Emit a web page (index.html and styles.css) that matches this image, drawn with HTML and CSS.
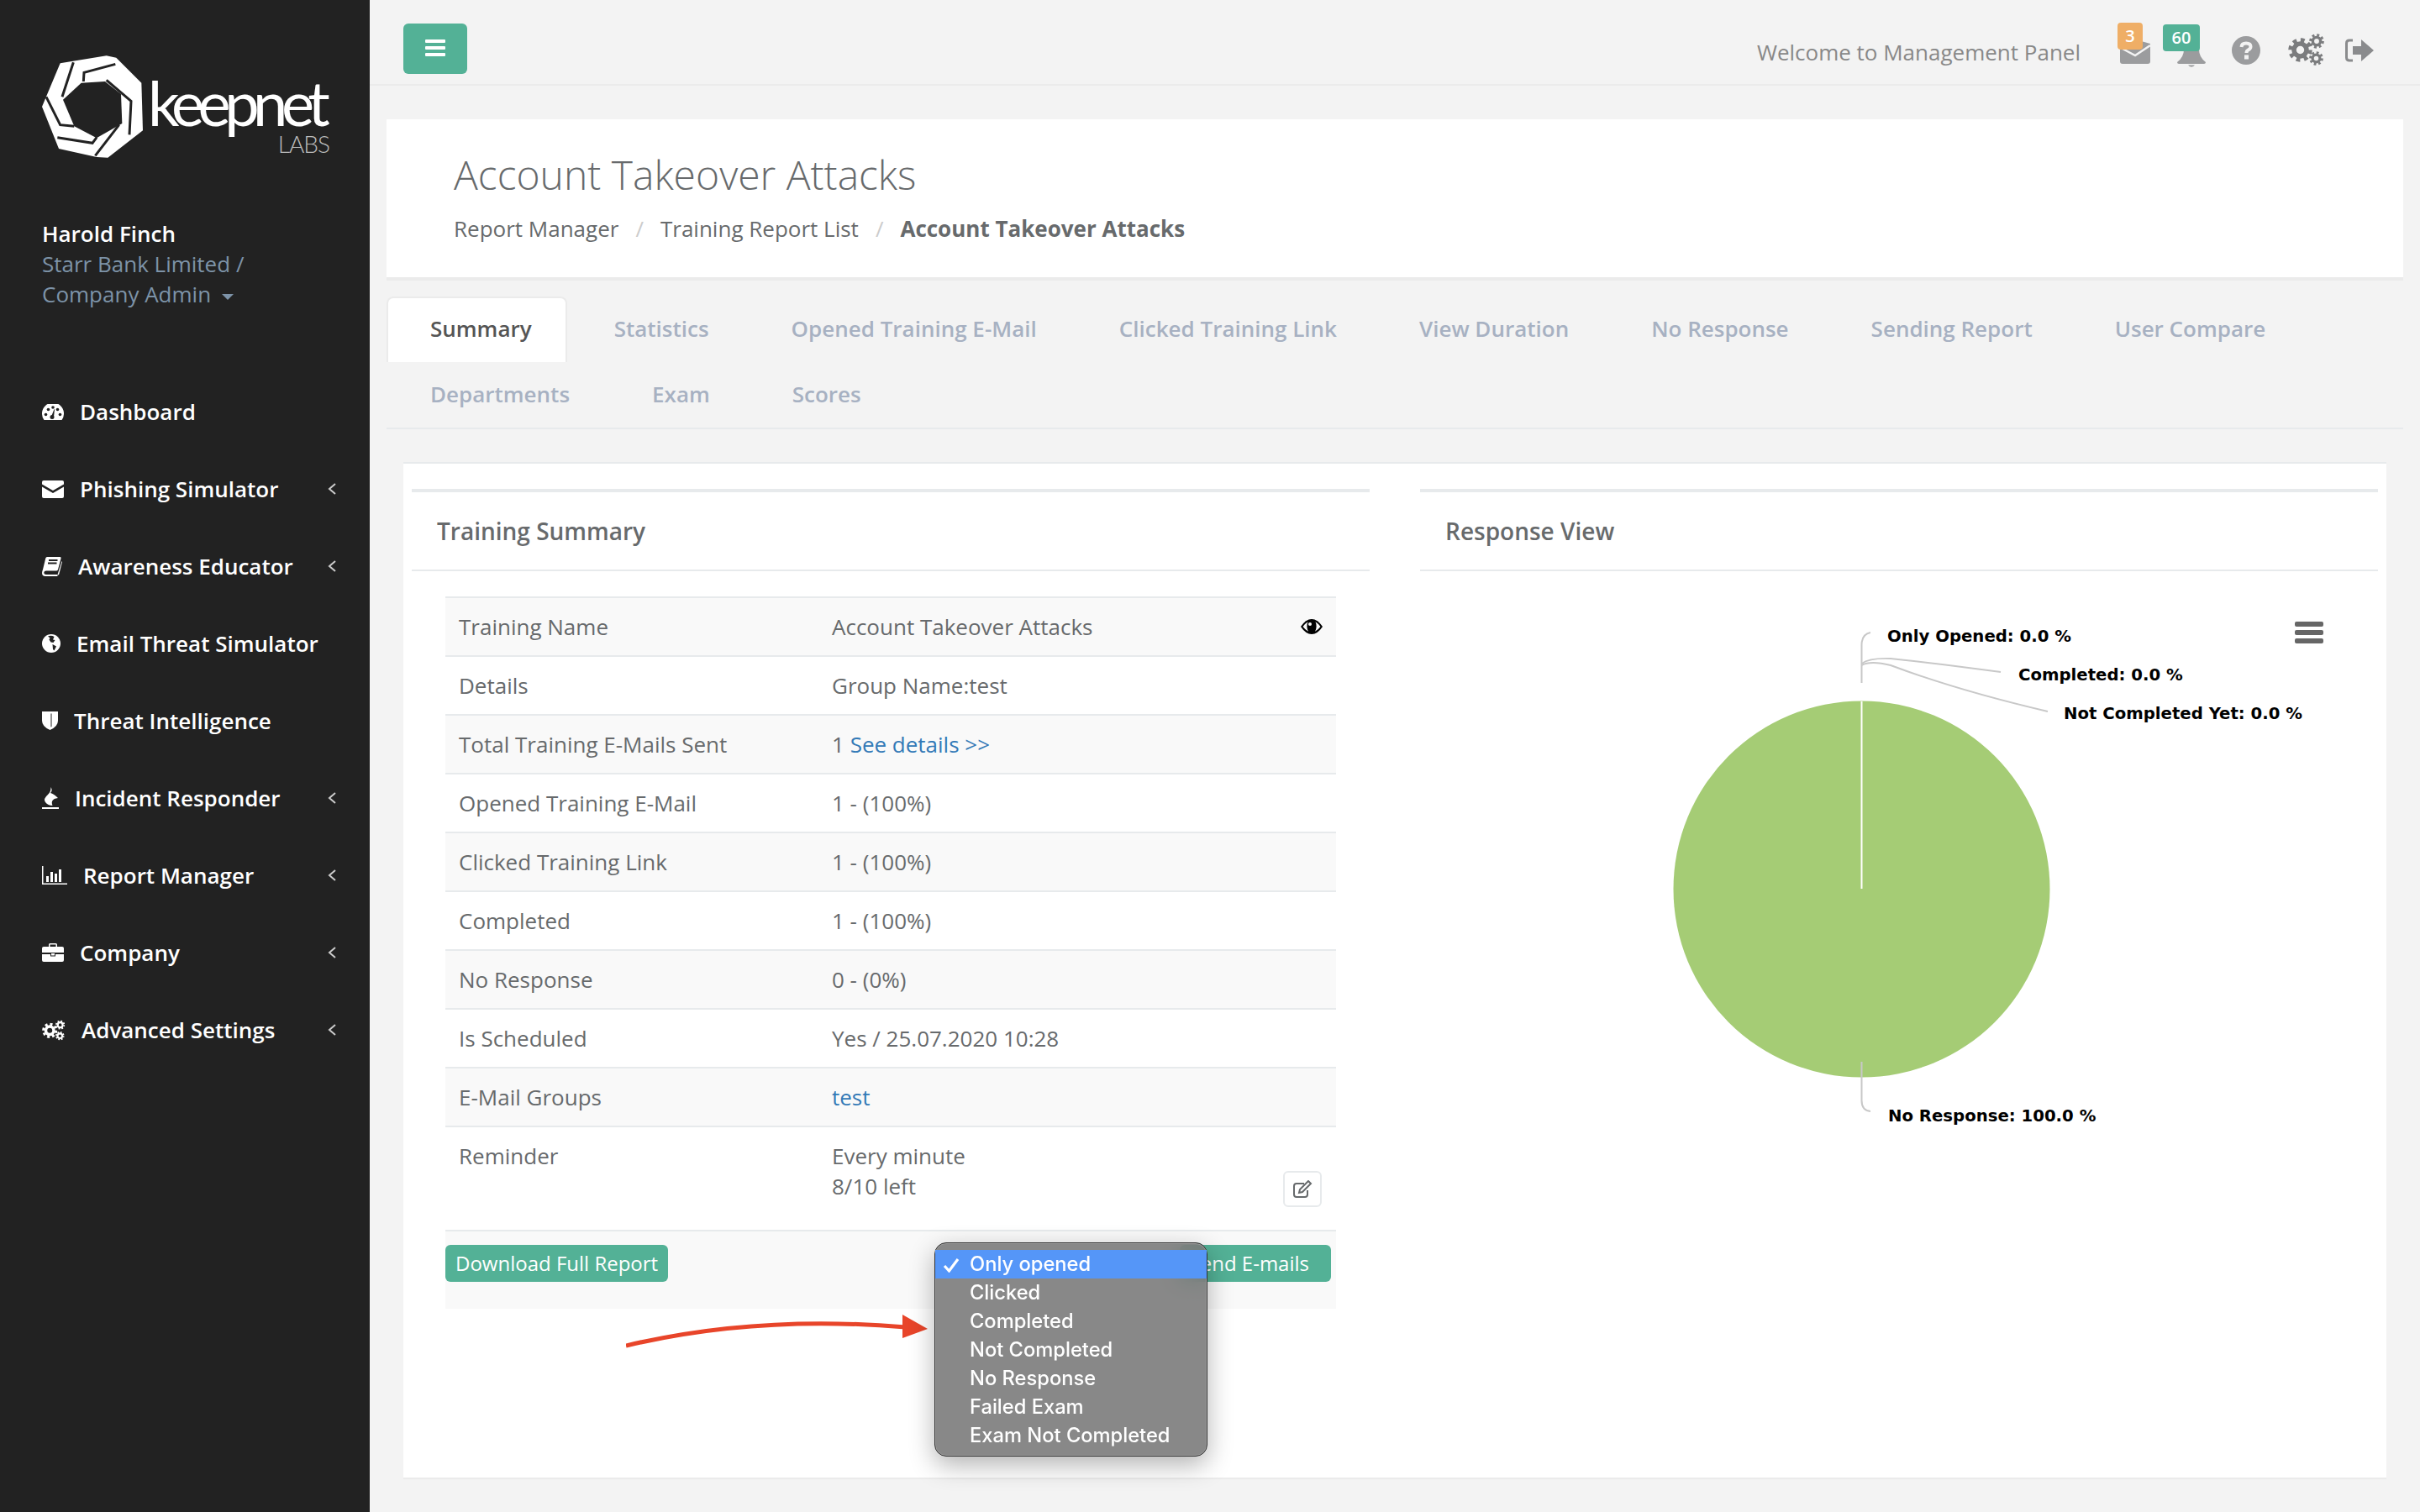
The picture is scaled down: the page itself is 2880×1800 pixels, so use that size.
FILE: index.html
```html
<!DOCTYPE html>
<html lang="en">
<head>
    <meta charset="UTF-8">
    <title>Account Takeover Attacks</title>
    <link rel="stylesheet" href="styles.css">
</head>
<body>
    <svg class="defs" width="0" height="0">
        <symbol id="gear" viewBox="0 0 24 24">
            <circle cx="12" cy="12" r="6.2" fill="none" stroke="currentColor" stroke-width="4.6"/>
            <circle cx="12" cy="12" r="9.8" fill="none" stroke="currentColor" stroke-width="4" stroke-dasharray="3.9 3.8"/>
        </symbol>
    </svg>

    <nav class="sidebar">
        <div class="logo">
            <svg class="logo-mark" viewBox="150 198 360 364" width="120" height="122">
                <path d="M380 198L415 205L505 295L510 465L385 562L345 560L210 530L150 380L215 225Z" fill="#fff"/>
                <path d="M375 290L432 335L436 440L345 492L265 450L225 355L290 295Z" fill="#222"/>
                <path d="M262 222L222 345M298 290L300 258L412 228M380 285L468 360L462 480M340 555L425 445M205 490L330 510L345 490M165 345L215 445L265 450" fill="none" stroke="#222" stroke-width="9"/>
            </svg>
            <div class="logo-text">
                <span class="logo-name">keepnet</span>
                <span class="logo-labs">LABS</span>
            </div>
        </div>
        <div class="profile">
            <div class="profile-name">Harold Finch</div>
            <div class="profile-role">Starr Bank Limited /<br>Company Admin <span class="caret"></span></div>
        </div>
        <ul class="menu">
            <li>
                <svg width="26" height="19" viewBox="0 0 26 19"><path d="M2.5 19A13 13 0 1 1 23.500 19Z" fill="#fff"/><g fill="#222"><circle cx="4.500" cy="12.500" r="1.800"/><circle cx="7.500" cy="6.500" r="1.800"/><circle cx="13" cy="4" r="1.800"/><circle cx="21.500" cy="12.500" r="1.800"/><circle cx="18.500" cy="6.500" r="1.800"/><circle cx="12" cy="15.500" r="2.500"/><path d="M11 15L14.500 6L15 6.500L14 15Z"/></g></svg>
                <span>Dashboard</span>
            </li>
            <li>
                <svg width="26" height="21" viewBox="0 0 26 21" fill="#fff"><path d="M0 2Q0 0 2 0H24Q26 0 26 2V4.500L13 12L0 4.500Z"/><path d="M0 7.500L13 15L26 7.500V19Q26 21 24 21H2Q0 21 0 19Z"/></svg>
                <span>Phishing Simulator</span>
                <svg class="chevron" width="10" height="16" viewBox="0 0 10 16"><path d="M9 2L2 8L9 14" fill="none" stroke="#ccc" stroke-width="2"/></svg>
            </li>
            <li>
                <svg width="24" height="23" viewBox="0 0 24 23" fill="#fff"><path d="M6 0H21.500Q23 0 22.500 2L19 15Q18.500 16.500 17 16.500H5Q2.500 16.500 2.300 18.500Q2.300 21 5 21H18.500V23H4Q0 23 0 19Q0 17.500 1 15L4.300 1.500Q4.700 0 6 0Z"/><path d="M23.500 5L24 6L20 21.500L18.500 21Z"/><path d="M8 4H18.500M7 7.500H17.500" stroke="#222" stroke-width="1.800"/></svg>
                <span>Awareness Educator</span>
                <svg class="chevron" width="10" height="16" viewBox="0 0 10 16"><path d="M9 2L2 8L9 14" fill="none" stroke="#ccc" stroke-width="2"/></svg>
            </li>
            <li>
                <svg width="22" height="22" viewBox="0 0 22 22"><circle cx="11" cy="11" r="11" fill="#fff"/><path d="M7 2.500Q11 1 14.500 3L13 6.500L15.500 7L13.500 10L10.500 9.500L8.500 6.500L9.500 4.500Z" fill="#222"/><path d="M12.500 12L17 14.500L14.500 19.500L13 18Z" fill="#222"/></svg>
                <span>Email Threat Simulator</span>
            </li>
            <li>
                <svg width="19" height="22" viewBox="0 0 19 22"><path d="M0 0H19V11Q19 18 9.500 22Q0 18 0 11Z" fill="#fff"/><path d="M10.500 2.500H11.500V18L10.500 18.500Z" fill="#222"/></svg>
                <span>Threat Intelligence</span>
            </li>
            <li>
                <svg width="20" height="26" viewBox="0 0 20 26" fill="#fff"><path d="M10.500 0Q13 4 10 7Q14 8 19 13Q14 13.500 12.500 16Q11 18 12.500 22Q7 22 4 18Q1 14 7 9Q11 5 10.500 0Z"/><rect y="24" width="20" height="2"/></svg>
                <span>Incident Responder</span>
                <svg class="chevron" width="10" height="16" viewBox="0 0 10 16"><path d="M9 2L2 8L9 14" fill="none" stroke="#ccc" stroke-width="2"/></svg>
            </li>
            <li>
                <svg width="30" height="22" viewBox="0 0 30 22" fill="#fff"><path d="M0 0H1.500V20.500H30V22H0Z"/><rect x="5" y="12" width="3" height="7"/><rect x="10" y="7" width="3" height="12"/><rect x="15" y="9" width="3" height="10"/><rect x="20" y="4" width="3" height="15"/></svg>
                <span>Report Manager</span>
                <svg class="chevron" width="10" height="16" viewBox="0 0 10 16"><path d="M9 2L2 8L9 14" fill="none" stroke="#ccc" stroke-width="2"/></svg>
            </li>
            <li>
                <svg width="26" height="22" viewBox="0 0 26 22" fill="#fff"><path d="M8 4V1.500Q8 0 9.500 0H16.500Q18 0 18 1.500V4H16.500V1.500H9.500V4Z"/><path d="M2 4H24Q26 4 26 6V11H0V6Q0 4 2 4Z"/><path d="M0 13H10V15.500H16V13H26V20Q26 22 24 22H2Q0 22 0 20Z"/><rect x="11" y="12" width="4" height="2.500"/></svg>
                <span>Company</span>
                <svg class="chevron" width="10" height="16" viewBox="0 0 10 16"><path d="M9 2L2 8L9 14" fill="none" stroke="#ccc" stroke-width="2"/></svg>
            </li>
            <li>
                <svg width="28" height="25" viewBox="0 0 44 38" color="#fff"><use href="#gear" x="0" y="5" width="29" height="29"/><use href="#gear" x="25" y="0" width="18" height="18"/><use href="#gear" x="25" y="21" width="17" height="17"/></svg>
                <span>Advanced Settings</span>
                <svg class="chevron" width="10" height="16" viewBox="0 0 10 16"><path d="M9 2L2 8L9 14" fill="none" stroke="#ccc" stroke-width="2"/></svg>
            </li>
        </ul>
    </nav>

    <div class="main">
        <header class="topbar">
            <button class="menu-button">
                <svg width="24" height="20" viewBox="0 0 24 20" fill="#fff"><rect width="24" height="4" rx="1"/><rect y="8" width="24" height="4" rx="1"/><rect y="16" width="24" height="4" rx="1"/></svg>
            </button>
            <div class="topbar-right">
                <span class="welcome">Welcome to Management Panel</span>
                <span class="top-icon icon-mail">
                    <svg width="36" height="29" viewBox="0 0 36 29"><path d="M0 12L18 0L36 5V26Q36 29 33 29H3Q0 29 0 26Z" fill="#9b9c9e"/><path d="M3 11L18 19L36 7" fill="none" stroke="#f3f3f3" stroke-width="2.500"/></svg>
                    <span class="badge badge-orange">3</span>
                </span>
                <span class="top-icon icon-bell">
                    <svg width="34" height="38" viewBox="0 0 34 38" fill="#9b9c9e"><path d="M8 4H26V16Q26 25 34 31Q34 33 32 33H2Q0 33 0 31Q8 25 8 16Z"/><path d="M13 34.500A4.500 4 0 0 0 21 34.500Z"/></svg>
                    <span class="badge badge-green">60</span>
                </span>
                <span class="top-icon icon-help">
                    <svg width="34" height="34" viewBox="0 0 34 34"><circle cx="17" cy="17" r="17" fill="#9b9c9e"/><path d="M11.500 13Q11.800 8.500 17 8.500Q22.500 8.500 22.500 12.500Q22.500 15 19.500 16.500Q17.500 17.500 17.500 20" fill="none" stroke="#f3f3f3" stroke-width="4"/><rect x="15" y="22.500" width="5" height="5" fill="#f3f3f3"/></svg>
                </span>
                <span class="top-icon icon-cogs">
                    <svg width="44" height="38" viewBox="0 0 44 38" color="#7b7c7e"><use href="#gear" x="0" y="5" width="29" height="29"/><use href="#gear" x="25" y="0" width="18" height="18"/><use href="#gear" x="25" y="21" width="17" height="17"/></svg>
                </span>
                <span class="top-icon icon-out">
                    <svg width="34" height="28" viewBox="0 0 34 28"><path d="M9 2H5Q1.500 2 1.500 5.500V22.500Q1.500 26 5 26H9" fill="none" stroke="#8a8b8d" stroke-width="3"/><path d="M9 9H19V1L34 14L19 27V19H9Z" fill="#8a8b8d"/></svg>
                </span>
            </div>
        </header>

        <div class="page-head">
            <h1>Account Takeover Attacks</h1>
            <ol class="crumbs">
                <li>Report Manager</li>
                <li class="sep">/</li>
                <li>Training Report List</li>
                <li class="sep">/</li>
                <li class="current">Account Takeover Attacks</li>
            </ol>
        </div>

        <ul class="tabs">
            <li class="active">Summary</li>
            <li>Statistics</li>
            <li>Opened Training E-Mail</li>
            <li>Clicked Training Link</li>
            <li>View Duration</li>
            <li>No Response</li>
            <li>Sending Report</li>
            <li>User Compare</li>
            <li>Departments</li>
            <li>Exam</li>
            <li>Scores</li>
        </ul>

        <div class="panel">
            <section class="ibox">
                <h2 class="ibox-title">Training Summary</h2>
                <div class="summary">
                    <table class="info">
                        <tr><td>Training Name</td><td><div class="cell-split"><span>Account Takeover Attacks</span>
                            <svg class="eye" width="26" height="18" viewBox="0 0 26 18"><path d="M0 9Q6 0 13 0Q20 0 26 9Q20 18 13 18Q6 18 0 9Z" fill="#000"/><path d="M2.500 9Q5.500 5 8.500 3.200Q6 9 9 14.800Q5.500 13 2.500 9ZM23.500 9Q20.500 13 17 14.800Q20 9 17.500 3.200Q20.500 5 23.500 9Z" fill="#f9f9f9"/><circle cx="11" cy="6" r="2" fill="#f9f9f9"/></svg>
                        </div></td></tr>
                        <tr><td>Details</td><td>Group Name:test</td></tr>
                        <tr><td>Total Training E-Mails Sent</td><td>1 <a href="#">See details &gt;&gt;</a></td></tr>
                        <tr><td>Opened Training E-Mail</td><td>1 - (100%)</td></tr>
                        <tr><td>Clicked Training Link</td><td>1 - (100%)</td></tr>
                        <tr><td>Completed</td><td>1 - (100%)</td></tr>
                        <tr><td>No Response</td><td>0 - (0%)</td></tr>
                        <tr><td>Is Scheduled</td><td>Yes / 25.07.2020 10:28</td></tr>
                        <tr><td>E-Mail Groups</td><td><a href="#">test</a></td></tr>
                        <tr class="last"><td>Reminder</td><td><div class="cell-split"><span>Every minute<br>8/10 left</span>
                            <button class="edit-button">
                                <svg width="24" height="22" viewBox="0 0 24 22"><path d="M14 4H5Q2 4 2 7V17Q2 20 5 20H15Q18 20 18 17V12" fill="none" stroke="#676a6c" stroke-width="2"/><path d="M8 15L9 11L19 1L22 4L12 14Z" fill="none" stroke="#676a6c" stroke-width="2"/></svg>
                            </button>
                        </div></td></tr>
                    </table>
                    <div class="summary-foot">
                        <button class="btn">Download Full Report</button>
                        <button class="btn btn-send">Send E-mails</button>
                    </div>

                    <svg class="arrow" width="370" height="50" viewBox="745 1560 370 50"><path d="M745 1602Q900 1565 1078 1580" fill="none" stroke="#e8452a" stroke-width="5"/><path d="M1074 1565L1104 1582L1074 1593Z" fill="#e8452a"/></svg>

                    <ul class="select-menu">
                        <li class="selected"><svg width="20" height="18" viewBox="0 0 20 18"><path d="M2 10L7.500 16L18 2" fill="none" stroke="#fff" stroke-width="3.200"/></svg>Only opened</li>
                        <li>Clicked</li>
                        <li>Completed</li>
                        <li>Not Completed</li>
                        <li>No Response</li>
                        <li>Failed Exam</li>
                        <li>Exam Not Completed</li>
                    </ul>
                </div>
            </section>

            <section class="ibox">
                <h2 class="ibox-title">Response View</h2>
                <svg class="chart" width="1140" height="800" viewBox="1690 680 1140 800">
                    <circle cx="2215.500" cy="1058.500" r="224" fill="#a5cc75"/>
                    <path d="M2215.500 835V1058" stroke="#fff" stroke-width="2"/>
                    <g fill="none" stroke="#c8c8c8" stroke-width="2">
                        <path d="M2215.500 813V768Q2215.500 755 2226 753"/>
                        <path d="M2215.500 790Q2225 783 2250 784Q2300 789 2381 800"/>
                        <path d="M2215.500 792Q2226 786 2250 792Q2330 822 2437 847"/>
                        <path d="M2215.500 1264V1310Q2215.500 1322 2226 1323"/>
                    </g>
                    <g class="chart-label">
                        <text x="2246" y="764">Only Opened: 0.0 %</text>
                        <text x="2402" y="810">Completed: 0.0 %</text>
                        <text x="2456" y="856">Not Completed Yet: 0.0 %</text>
                        <text x="2247" y="1335">No Response: 100.0 %</text>
                    </g>
                    <g fill="#666">
                        <rect x="2731" y="740" width="34" height="6" rx="2"/>
                        <rect x="2731" y="750" width="34" height="6" rx="2"/>
                        <rect x="2731" y="760" width="34" height="6" rx="2"/>
                    </g>
                </svg>
            </section>
        </div>
    </div>
</body>
</html>
```

FILE: styles.css
```css
* {
    box-sizing: border-box;
}
html, body {
    margin: 0;
    padding: 0;
}
body {
    display: flex;
    min-height: 1800px;
    background-color: #f3f3f3;
    color: #676a6c;
    font-family: 'Open Sans', sans-serif;
    font-size: 26px;
    line-height: 36px;
}
ul, ol {
    list-style: none;
    margin: 0;
    padding: 0;
}
.defs {
    position: absolute;
}

/* sidebar */
.sidebar {
    width: 440px;
    flex-shrink: 0;
    background-color: #222;
    padding-top: 66px;
}
.logo {
    display: flex;
    height: 122px;
    margin-left: 50px;
}
.logo-mark {
    flex-shrink: 0;
}
.logo-text {
    display: flex;
    flex-direction: column;
    width: 216px;
    margin-left: 6px;
    padding-top: 18px;
}
.logo-name {
    font-family: Lato, sans-serif;
    font-weight: 400;
    font-size: 74px;
    line-height: 76px;
    color: #fff;
    letter-spacing: -7.5px;
    white-space: nowrap;
}
.logo-labs {
    align-self: flex-end;
    margin-top: -3px;
    font-family: Lato, sans-serif;
    font-weight: 300;
    font-size: 28px;
    line-height: 28px;
    color: #bbb;
    letter-spacing: -1px;
}
.profile {
    margin: 72px 0 76px 50px;
}
.profile-name {
    color: #fff;
    font-weight: 600;
}
.profile-role {
    color: #7d93a8;
}
.caret {
    display: inline-block;
    margin-left: 6px;
    vertical-align: middle;
    border-top: 7px solid #7d93a8;
    border-left: 7px solid transparent;
    border-right: 7px solid transparent;
}
.menu li {
    display: flex;
    align-items: center;
    height: 92px;
    padding: 0 40px 0 50px;
    color: #fff;
    font-weight: 600;
}
.menu li span {
    margin-left: 19px;
}
.chevron {
    margin-left: auto;
}

/* top bar */
.main {
    flex: 1;
    min-width: 0;
    padding: 0 20px;
}
.topbar {
    display: flex;
    justify-content: space-between;
    height: 102px;
    margin: 0 -20px;
    padding: 28px 55px 0 40px;
    border-bottom: 2px solid #ebebeb;
}
.menu-button {
    width: 76px;
    height: 60px;
    border: none;
    border-radius: 6px;
    background-color: #53b196;
}
.topbar-right {
    display: flex;
    align-items: center;
    height: 66px;
}
.welcome {
    margin-right: 47px;
    padding-top: 1px;
    color: #888;
}
.top-icon {
    position: relative;
    display: flex;
}
.top-icon svg {
    display: block;
}
.icon-bell {
    margin-left: 32px;
    margin-top: 2px;
}
.icon-help {
    margin-left: 31px;
    margin-top: -3px;
}
.icon-cogs {
    margin-left: 33px;
    margin-top: -4px;
}
.icon-out {
    margin-left: 24px;
    margin-top: -3px;
}
.badge {
    position: absolute;
    top: -20px;
    height: 32px;
    border-radius: 4px;
    color: #fff;
    font-size: 20px;
    font-weight: 600;
    line-height: 32px;
    text-align: center;
}
.badge-orange {
    left: -3px;
    width: 30px;
    background-color: #efae66;
}
.badge-green {
    top: -14px;
    left: -17px;
    width: 44px;
    background-color: #53b196;
}

/* page heading */
.page-head {
    height: 192px;
    margin-top: 40px;
    padding: 36px 80px 0;
    background-color: #fff;
    border-bottom: 4px solid #ebebeb;
}
.page-head h1 {
    margin: 0;
    font-size: 48px;
    font-weight: 300;
    line-height: 60px;
}
.crumbs {
    display: flex;
    margin-top: 16px;
}
.crumbs .sep {
    padding: 0 20px;
    color: #ccc;
}
.crumbs .current {
    font-weight: 700;
}

/* tabs */
.tabs {
    display: flex;
    flex-wrap: wrap;
    margin-top: 19px;
    border-bottom: 2px solid #e7eaec;
    color: #a7b1c2;
    font-weight: 600;
}
.tabs li {
    height: 78px;
    margin-right: 4px;
    padding: 18px 40px 20px 50px;
    border: 2px solid transparent;
    border-bottom: none;
}
.tabs .active {
    background-color: #fff;
    border-color: #ebebeb;
    border-radius: 8px 8px 0 0;
    color: #555;
}

/* panel */
.panel {
    display: grid;
    grid-template-columns: 1140px 1140px;
    gap: 60px;
    margin: 39px 0 0 20px;
    width: 2360px;
    height: 1211px;
    padding: 30px 10px 0;
    background-color: #fff;
    border-top: 2px solid #e7eaec;
    border-bottom: 2px solid #ebebeb;
}
.ibox {
    min-width: 0;
}
.ibox-title {
    height: 98px;
    margin: 0;
    padding: 0 30px;
    border-top: 4px solid #e7eaec;
    border-bottom: 2px solid #e7eaec;
    font-size: 28px;
    font-weight: 600;
    line-height: 92px;
}
.summary {
    position: relative;
    padding: 30px 40px 0;
}
.info {
    width: 100%;
    table-layout: fixed;
    border-collapse: separate;
    border-spacing: 0;
}
.info td {
    padding: 16px;
    border-top: 2px solid #e7eaec;
    vertical-align: top;
}
.info td:first-child {
    width: 444px;
}
.info tr:nth-child(odd) td {
    background-color: #f9f9f9;
}
.info .last td {
    padding-bottom: 27px;
    background-color: #fff;
}
.info a {
    color: #337ab7;
    text-decoration: none;
}
.cell-split {
    display: flex;
    justify-content: space-between;
}
.eye {
    margin-top: 9px;
}
.edit-button {
    display: flex;
    align-items: center;
    justify-content: center;
    width: 46px;
    height: 43px;
    margin: 36px 1px 0 0;
    padding: 0;
    background-color: #fff;
    border: 2px solid #e7eaec;
    border-radius: 6px;
}
.summary-foot {
    display: flex;
    justify-content: space-between;
    height: 94px;
    padding: 16px 6px 0 0;
    background-color: #f9f9f9;
    border-top: 2px solid #e7eaec;
}
.btn {
    height: 44px;
    padding: 0 12px 2px;
    border: none;
    border-radius: 6px;
    background-color: #53b196;
    color: #fff;
    font-family: 'Open Sans', sans-serif;
    font-size: 24px;
}
.btn-send {
    padding-right: 26px;
}
.arrow {
    position: absolute;
    left: 255px;
    top: 880px;
}
.select-menu {
    position: absolute;
    left: 622px;
    top: 799px;
    width: 325px;
    height: 255px;
    padding-top: 8px;
    border: 1px solid #333;
    border-radius: 14px;
    background-color: rgba(120, 120, 120, 0.88);
    backdrop-filter: blur(12px);
    box-shadow: inset 0 0 0 1px #9a9a9a, 0 10px 30px rgba(0, 0, 0, 0.3);
    color: #fff;
    font-family: Inter, sans-serif;
    font-size: 23.7px;
    font-weight: 500;
    line-height: 34px;
}
.select-menu li {
    height: 34px;
    padding-left: 41px;
}
.select-menu .selected {
    position: relative;
    background-color: #5596f8;
}
.select-menu .selected svg {
    position: absolute;
    left: 9px;
    top: 9px;
}

/* chart */
.chart {
    display: block;
}
.chart-label {
    fill: #000;
    font-family: 'DejaVu Sans', sans-serif;
    font-size: 19.7px;
    font-weight: 700;
}
```
